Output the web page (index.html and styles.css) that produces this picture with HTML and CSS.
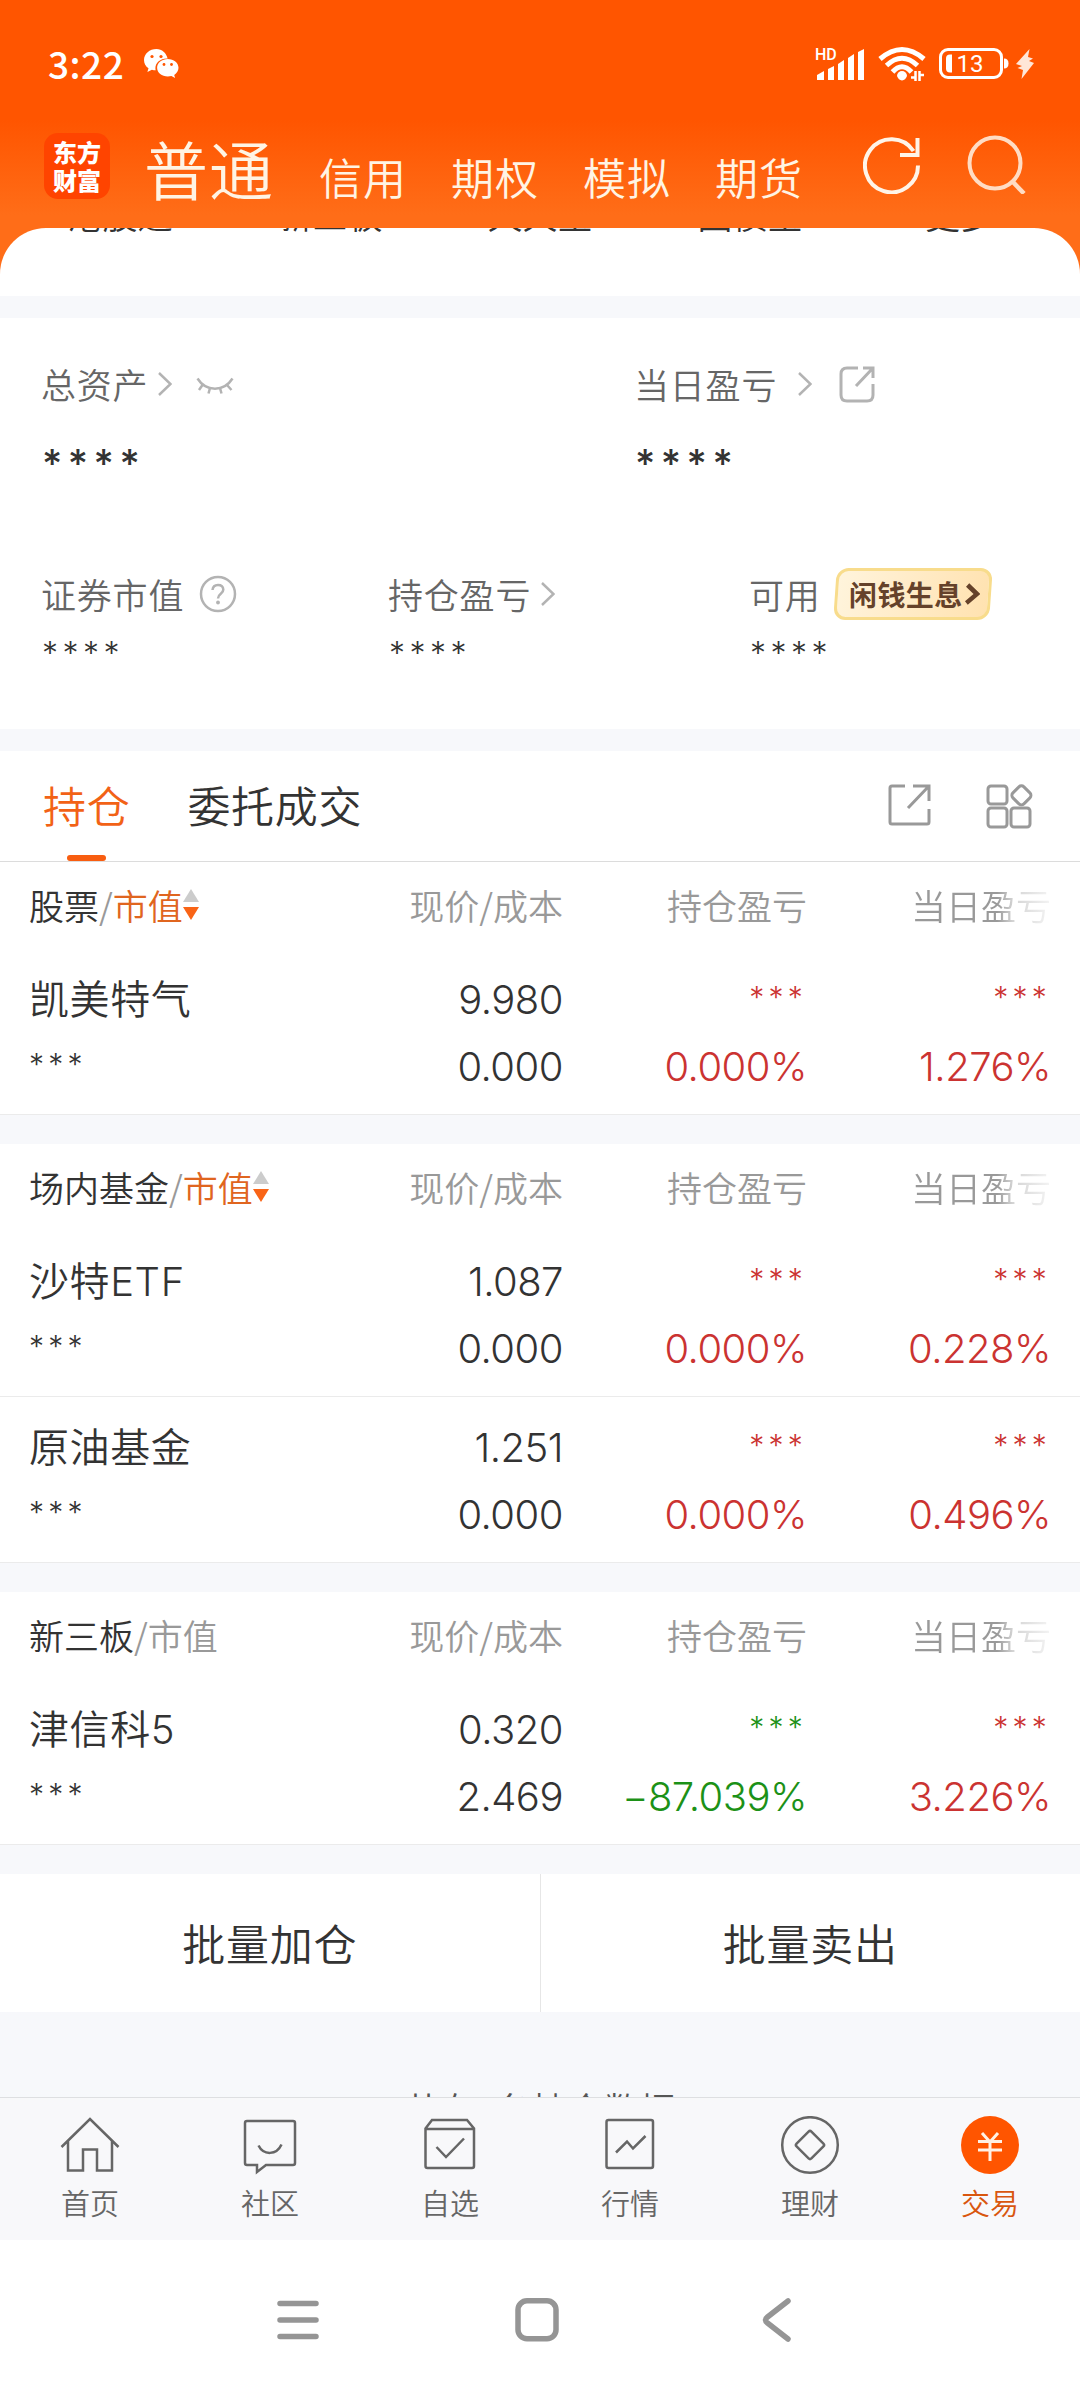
FILE: index.html
```html
<!DOCTYPE html>
<html lang="zh-CN">
  <head>
    <meta charset="UTF-8" />
    <meta name="viewport" content="width=device-width, initial-scale=1" />
    <title>交易 - 持仓</title>
    <link rel="stylesheet" href="styles.css">
  </head>
  <body>
    <header class="header">
      <div class="status-bar">
        <span class="time">3:22</span>
        <svg class="wechat" width="36" height="30" viewBox="0 0 36 30" fill="#fff">
          <path d="M12.500 0C5.600 0 0 4.900 0 11c0 3.400 1.700 6.300 4.500 8.300L3.400 23l4.500-2.300c1.200.4 2.500.6 3.800.6-.2-.8-.3-1.500-.3-2.300 0-5.300 5-9.600 11.200-9.600h1C22.400 4 17.900 0 12.500 0z" />
          <path d="M34.500 18.800c0-4.900-4.800-8.800-10.700-8.800s-10.700 3.900-10.700 8.800 4.800 8.800 10.700 8.800c1.300 0 2.500-.2 3.600-.5l3.700 1.900-.9-3.100c2.600-1.700 4.300-4.200 4.300-7.100z" />
          <g fill="#ff5500">
            <circle cx="8" cy="7.500" r="1.600" />
            <circle cx="17" cy="7.500" r="1.600" />
            <circle cx="20" cy="15.500" r="1.400" />
            <circle cx="27.500" cy="15.500" r="1.400" />
          </g>
        </svg>
        <div class="status-icons">
          <svg width="50" height="34" viewBox="0 0 50 34" fill="#fff">
            <text class="hd" x="0" y="12.500">HD</text>
            <path d="M2 33v-5l7-4v9zM13 33V22l6-3v14zM23 33V17l6-4v20zM33 33V11l6-4v26zM43 33V5l6-3v31z" />
          </svg>
          <svg width="48" height="36" viewBox="0 0 48 36" fill="none" stroke="#fff">
            <path d="M2 13Q24-6 46 13" stroke-width="5" />
            <path d="M8.500 19.500Q24 5 39.500 19.500" stroke-width="5" />
            <path d="M14.500 26Q24 15.500 33.500 26" stroke-width="5" />
            <path d="M19 30a5 5 0 0 1 10 0q-1.500 4-5 4.500-3.500-.5-5-4.500z" fill="#fff" stroke="none" />
            <path d="M37.500 25v10M33 31.500h4M41.500 35V25M42 29h4" stroke-width="2.500" />
          </svg>
          <svg width="70" height="32" viewBox="0 0 70 32">
            <rect x="1.500" y="1.500" width="61" height="28" rx="7.500" fill="none" stroke="#fff" stroke-width="3" />
            <path d="M65 10.500q4.500 0 4.500 5t-4.500 5z" fill="#fff" />
            <path d="M13 6.500v18H11q-4 0-4-4v-10q0-4 4-4z" fill="#fff" />
            <text class="battery-level" x="31" y="24">13</text>
          </svg>
          <svg class="bolt" width="18" height="30" viewBox="0 0 18 30"><path d="M13.500 0 0 15l6 2-4.500 2L7 21l-1.500 9L18 14l-5-2 4-2.500L12 8z" fill="#ffe6d8" /></svg>
        </div>
      </div>
      <div class="account-bar">
        <div class="logo">东方<br>财富</div>
        <nav class="account-tabs">
          <span class="account-tab current">普通</span>
          <span class="account-tab">信用</span>
          <span class="account-tab">期权</span>
          <span class="account-tab">模拟</span>
          <span class="account-tab">期货</span>
        </nav>
        <div class="header-actions">
          <svg width="58" height="60" viewBox="0 0 58 60" fill="none" stroke="#fff4e8" stroke-width="4">
            <path d="M55 31.500A26.500 26.500 0 1 1 50.500 17" />
            <path d="M54.500 4v17H37" />
          </svg>
          <svg width="60" height="60" viewBox="0 0 60 60" fill="none" stroke="#ffdcc4" stroke-width="4">
            <circle cx="28" cy="29" r="25.500" />
            <path d="m44.500 46.500 12.500 13" stroke-width="4.500" />
          </svg>
        </div>
      </div>
    </header>

    <section class="shortcuts">
      <div class="shortcut-row">
        <span>港股通</span>
        <span>新三板</span>
        <span>天天宝</span>
        <span>国债宝</span>
        <span>更多</span>
      </div>
    </section>

    <section class="assets">
      <div class="asset-main">
        <div class="asset">
          <div class="asset-label">总资产
            <svg class="chevron near" width="14" height="24" viewBox="0 0 14 24"><path d="m1 1 11.500 11L1 23" /></svg>
            <svg class="eye" width="38" height="18" viewBox="0 0 38 18"><path d="M1.500 1.500C10 15 28 15 36.500 1.500M6.500 8 3 13M14 11l-1.500 5.500M24 11l1.500 5.500M31 8l4.500 5" /></svg>
          </div>
          <div class="asset-value large">****</div>
        </div>
        <div class="asset">
          <div class="asset-label">当日盈亏
            <svg class="chevron far" width="14" height="24" viewBox="0 0 14 24"><path d="m1 1 11.500 11L1 23" /></svg>
            <svg class="share-small" width="36" height="37" viewBox="0 0 36 37"><path d="M19 2H8Q2 2 2 8v21q0 6 6 6h20q6 0 6-6V18M24 2h10v10M33.500 2.500 17 20" /></svg>
          </div>
          <div class="asset-value large">****</div>
        </div>
      </div>
      <div class="asset-detail">
        <div class="asset">
          <div class="asset-label">证券市值
            <svg class="help" width="38" height="38" viewBox="0 0 38 38"><circle cx="19" cy="19" r="17" /><path d="M13.500 15q.5-5 5.500-5t5.300 4.500c.2 4.500-5.300 4-5.300 9" /><circle class="dot" cx="19" cy="27.500" r="1.900" /></svg>
          </div>
          <div class="asset-value">****</div>
        </div>
        <div class="asset">
          <div class="asset-label">持仓盈亏
            <svg class="chevron" width="14" height="24" viewBox="0 0 14 24"><path d="m1 1 11.500 11L1 23" /></svg>
          </div>
          <div class="asset-value">****</div>
        </div>
        <div class="asset">
          <div class="asset-label">可用
            <span class="promo"><span class="promo-text">闲钱生息</span><svg width="15" height="22" viewBox="0 0 15 22"><path d="m2 2 10 9L2 20" /></svg></span>
          </div>
          <div class="asset-value">****</div>
        </div>
      </div>
    </section>

    <section class="tabs">
      <span class="tab active">持仓</span>
      <span class="tab">委托成交</span>
      <div class="tab-actions">
        <svg width="44" height="44" viewBox="0 0 44 44"><path d="M18 3H5Q3 3 3 5v34q0 2 2 2h35q2 0 2-2V26M26 3h16v15M41.500 3.500 21 25" /></svg>
        <svg width="48" height="46" viewBox="0 0 48 46"><rect x="3" y="3" width="19" height="18" rx="3" /><rect x="3" y="25" width="19" height="19" rx="3" /><rect x="26" y="25" width="19" height="19" rx="3" /><rect x="28.500" y="4.500" width="15.500" height="15.500" rx="3.500" transform="rotate(45 36.200 12.500)" /></svg>
      </div>
    </section>

    <section class="holdings">
      <div class="table-head">
        <span class="kind">股票<i>/</i><b>市值</b><svg width="16" height="32" viewBox="0 0 16 32"><path d="M8 0l8 13H0z" fill="#ccc" /><path d="M0 18h16L8 31z" fill="#f96416" /></svg></span>
        <span>现价/成本</span>
        <span>持仓盈亏</span>
        <span class="fade">当日盈亏</span>
      </div>
      <div class="row">
        <div class="name">凯美特气<br><span class="stars">***</span></div>
        <div>9.980<br>0.000</div>
        <div class="up"><span class="stars">***</span><br>0.000%</div>
        <div class="up"><span class="stars">***</span><br>1.276%</div>
      </div>
    </section>

    <section class="holdings">
      <div class="table-head">
        <span class="kind">场内基金<i>/</i><b>市值</b><svg width="16" height="32" viewBox="0 0 16 32"><path d="M8 0l8 13H0z" fill="#ccc" /><path d="M0 18h16L8 31z" fill="#f96416" /></svg></span>
        <span>现价/成本</span>
        <span>持仓盈亏</span>
        <span class="fade">当日盈亏</span>
      </div>
      <div class="row">
        <div class="name">沙特ETF<br><span class="stars">***</span></div>
        <div>1.087<br>0.000</div>
        <div class="up"><span class="stars">***</span><br>0.000%</div>
        <div class="up"><span class="stars">***</span><br>0.228%</div>
      </div>
      <div class="row">
        <div class="name">原油基金<br><span class="stars">***</span></div>
        <div>1.251<br>0.000</div>
        <div class="up"><span class="stars">***</span><br>0.000%</div>
        <div class="up"><span class="stars">***</span><br>0.496%</div>
      </div>
    </section>

    <section class="holdings">
      <div class="table-head">
        <span class="kind">新三板<i>/市值</i></span>
        <span>现价/成本</span>
        <span>持仓盈亏</span>
        <span class="fade">当日盈亏</span>
      </div>
      <div class="row">
        <div class="name">津信科5<br><span class="stars">***</span></div>
        <div>0.320<br>2.469</div>
        <div class="down"><span class="stars">***</span><br>−87.039%</div>
        <div class="up"><span class="stars">***</span><br>3.226%</div>
      </div>
    </section>

    <div class="batch">
      <button class="batch-btn">批量加仓</button>
      <button class="batch-btn">批量卖出</button>
    </div>
    <div class="summary">共有4条持仓数据</div>

    <nav class="bottom-nav">
      <div class="nav-item">
        <svg width="60" height="60" viewBox="0 0 60 60"><path d="M1.500 31 30 3l28.500 28M8 25v29.500h15V33.500h14v21h15V25" /></svg>
        <span>首页</span>
      </div>
      <div class="nav-item">
        <svg width="60" height="60" viewBox="0 0 60 60"><path d="M7 5h46q2 0 2 2v40q0 2-2 2H26l-9 7v-7H7q-2 0-2-2V7q0-2 2-2zM18.500 29.500c5 10 18 10 23-1" /></svg>
        <span>社区</span>
      </div>
      <div class="nav-item">
        <svg width="60" height="60" viewBox="0 0 60 60"><path d="M5.500 12.500 12 4h35l7 8.500V50q0 2-2 2h-44.500q-2 0-2-2zM5.500 13H54M16.500 31l9.500 10 18-18.500" /></svg>
        <span>自选</span>
      </div>
      <div class="nav-item">
        <svg width="60" height="60" viewBox="0 0 60 60"><rect x="6.500" y="4" width="46.500" height="48" rx="2" /><path d="M16 36.500 27 25.500l6 7L45.500 20" /></svg>
        <span>行情</span>
      </div>
      <div class="nav-item">
        <svg width="60" height="60" viewBox="0 0 60 60"><circle cx="30" cy="29" r="27.800" /><rect x="19.500" y="18.500" width="21" height="21" rx="2" transform="rotate(45 30 29)" /></svg>
        <span>理财</span>
      </div>
      <div class="nav-item active">
        <svg width="60" height="60" viewBox="0 0 60 60"><circle class="coin" cx="30" cy="29" r="29" /><path class="yen" d="m22 17 8 9 8-9M30 26v19M18 25.500h24M18 34h24" /></svg>
        <span>交易</span>
      </div>
    </nav>

    <div class="system-nav">
      <svg width="48" height="48" viewBox="0 0 48 48"><path d="M6 7.500h36M6 24h36M6 40.500h36" /></svg>
      <svg width="48" height="48" viewBox="0 0 48 48"><rect x="5" y="4.800" width="38" height="38" rx="9" /></svg>
      <svg width="48" height="48" viewBox="0 0 48 48"><path d="M36 5 15.500 21q-4 3 0 6L36 43" /></svg>
    </div>
  </body>
</html>
```
FILE: styles.css
```css
* {
  box-sizing: border-box;
}

body {
  margin: 0;
  width: 1080px;
  height: 2400px;
  overflow: hidden;
  display: flex;
  flex-direction: column;
  background: #f7f8fb;
  color: #333;
  font-family: "Noto Sans CJK SC", sans-serif;
  font-weight: 350;
}

svg {
  display: block;
  flex: none;
}

/* horní oranžová lišta */
.header {
  height: 228px;
  flex: none;
  background: linear-gradient(#ff5500 0, #ff5500 120px, #ff6d18 215px, #ff6d18 228px);
  color: #fff4e4;
}

.status-bar {
  height: 128px;
  padding: 0 46px 0 48px;
  display: flex;
  align-items: center;
}

.time {
  margin-top: -3px;
  font-size: 37px;
  font-weight: 500;
  line-height: 50px;
  letter-spacing: 0.5px;
  color: #fff;
}

.wechat {
  margin-left: 20px;
}

.status-icons {
  margin-left: auto;
  display: flex;
  align-items: center;
  gap: 13px;
}

.hd {
  font: 500 16px Roboto, sans-serif;
}

.battery-level {
  font: 400 24px Roboto, sans-serif;
  fill: #fff;
  text-anchor: middle;
}

.bolt {
  margin-left: -6px;
}

.account-bar {
  height: 100px;
  padding: 5px 53px 0 44px;
  display: flex;
  align-items: flex-start;
}

.logo {
  width: 66px;
  height: 66px;
  padding-top: 5px;
  border-radius: 14px;
  background: #ff4400;
  color: #fff;
  font-size: 24px;
  font-weight: 900;
  line-height: 28px;
  text-align: center;
}

.account-tabs {
  margin: -1px 0 0 34px;
  display: flex;
  align-items: baseline;
  gap: 44px;
}

.account-tab {
  font-size: 43px;
  line-height: 70px;
  letter-spacing: 1px;
}

.account-tab.current {
  margin-right: 1px;
  font-size: 64px;
}

.header-actions {
  margin-left: auto;
  padding-top: 1px;
  display: flex;
  gap: 46px;
}

/* bílý panel se zaoblenými rohy */
.shortcuts {
  height: 68px;
  flex: none;
  background: linear-gradient(#ff6d18, #ff6d18) top / 100% 50px no-repeat;
}

.shortcut-row {
  height: 68px;
  padding: 0 15px;
  overflow: hidden;
  display: grid;
  grid-template-columns: repeat(5, 210px);
  border-radius: 46px 46px 0 0;
  background: #fff;
  font-size: 35px;
  line-height: 50px;
  text-align: center;
}

.shortcut-row span {
  margin-top: -39px;
}

.assets {
  height: 411px;
  flex: none;
  margin-top: 22px;
  padding: 40px 42px 0 41px;
  background: #fff;
}

.asset-main {
  height: 210px;
  display: grid;
  grid-template-columns: 593px 1fr;
}

.asset-detail {
  display: grid;
  grid-template-columns: 347px 361px 1fr;
}

.asset-label {
  height: 52px;
  display: flex;
  align-items: center;
  font-size: 35px;
  line-height: 52px;
  letter-spacing: 0.8px;
  color: #666;
  white-space: nowrap;
}

.asset-label svg {
  fill: none;
  stroke: #b3b3b3;
  stroke-width: 2.500;
}

.asset-label .chevron {
  margin-left: 10px;
}

.asset-label .far {
  margin-left: 21px;
}

.eye {
  margin: 3px 0 0 24px;
}

.asset-label .share-small {
  margin-left: 27px;
  stroke-width: 3;
}

.help {
  margin-left: 15px;
}

.help .dot {
  fill: #b3b3b3;
  stroke: none;
}

.asset-value {
  font-family: Inter, sans-serif;
  font-size: 32px;
  line-height: 40px;
  letter-spacing: 4.5px;
  padding: 14px 0 0 1px;
}

.asset-value.large {
  font-size: 39px;
  font-weight: 450;
  letter-spacing: 5.5px;
  padding-top: 34px;
}

.promo {
  width: 156px;
  height: 52px;
  margin-left: 14px;
  padding-left: 11px;
  display: flex;
  align-items: center;
  border: 3px solid #f8dc8c;
  border-radius: 12px;
  background: linear-gradient(100deg, #fff4dc, #ffe2b0);
  transform: skewX(-4deg);
}

.promo-text {
  font-size: 28px;
  font-weight: 700;
  letter-spacing: 0.4px;
  color: #65422a;
  transform: skewX(4deg);
}

.promo svg {
  margin-left: 2px;
  stroke: #65422a;
  stroke-width: 4.500;
}

.tabs {
  height: 111px;
  flex: none;
  margin-top: 22px;
  padding: 0 47px 0 43px;
  display: flex;
  background: #fff;
  border-bottom: 1px solid #dcdcdc;
}

.tab {
  margin-right: 57px;
  font-size: 43px;
  line-height: 107px;
  letter-spacing: 0.7px;
}

.tab.active {
  position: relative;
  color: #f26216;
}

.tab.active::after {
  content: "";
  position: absolute;
  left: 24px;
  bottom: 0;
  width: 39px;
  height: 6px;
  border-radius: 3px;
  background: #f85d10;
}

.tab-actions {
  margin: 32px 0 0 auto;
  display: flex;
  gap: 54px;
}

.tab-actions svg {
  fill: none;
  stroke: #999;
  stroke-width: 3;
}

/* tabulka pozic */
.holdings {
  flex: none;
  margin-bottom: 29px;
  background: #fff;
}

.table-head,
.row {
  padding: 0 29px;
  display: grid;
  grid-template-columns: 290px 244px 244px 244px;
  text-align: right;
}

.table-head {
  height: 87px;
  font-size: 35px;
  line-height: 85px;
  color: #999;
}

.kind {
  height: 85px;
  display: flex;
  align-items: center;
  color: #333;
}

.kind i {
  font-style: normal;
  color: #999;
}

.kind b {
  font-weight: 350;
  color: #e0651f;
}

.fade {
  color: transparent;
  background: linear-gradient(90deg, #999 190px, #d4d4d4 206px, #f4f4f4);
  background-clip: text;
  -webkit-background-clip: text;
}

.row {
  height: 166px;
  padding-top: 17px;
  border-bottom: 1px solid #ebebeb;
  font-family: Inter, "Noto Sans CJK SC", sans-serif;
  font-size: 40px;
  line-height: 67px;
  letter-spacing: -0.5px;
}

.row > div {
  height: 134px;
  white-space: nowrap;
}

.row .name {
  letter-spacing: 0.6px;
  text-align: left;
}

.stars {
  font-size: 30px;
  line-height: 1;
  letter-spacing: 4.2px;
  vertical-align: 6px;
}

.up {
  color: #cb3331;
}

.down {
  color: #1c9117;
}

.batch {
  height: 138px;
  flex: none;
  display: flex;
  background: #fff;
}

.batch-btn {
  flex: 1;
  padding: 0 0 3px;
  border: 0;
  background: none;
  color: #333;
  font: inherit;
  font-size: 43px;
  letter-spacing: 0.7px;
}

.batch-btn:first-child {
  border-right: 1px solid #e6e6e6;
}

.summary {
  height: 85px;
  flex: none;
  overflow: hidden;
  padding-top: 70px;
  font-size: 36px;
  line-height: 52px;
  text-align: center;
  color: #555;
}

.bottom-nav {
  height: 143px;
  flex: none;
  padding-top: 18px;
  display: flex;
  border-top: 1px solid #dedfe1;
  background: #f8f8fa;
}

.nav-item {
  flex: 1;
  display: flex;
  flex-direction: column;
  align-items: center;
  font-size: 29px;
  line-height: 40px;
  color: #666;
}

.nav-item svg {
  fill: none;
  stroke: #666;
  stroke-width: 2.500;
}

.nav-item span {
  margin-top: 6px;
}

.nav-item.active {
  color: #d9560e;
}

.nav-item .coin {
  fill: #ff5500;
  stroke: none;
}

.nav-item .yen {
  stroke: #fff1e4;
  stroke-width: 3;
}

.system-nav {
  flex: 1;
  padding: 56px 280px 0 274px;
  display: flex;
  justify-content: space-between;
  background: #fff;
}

.system-nav svg {
  fill: none;
  stroke: #959595;
  stroke-width: 5.500;
  stroke-linecap: round;
}
```
